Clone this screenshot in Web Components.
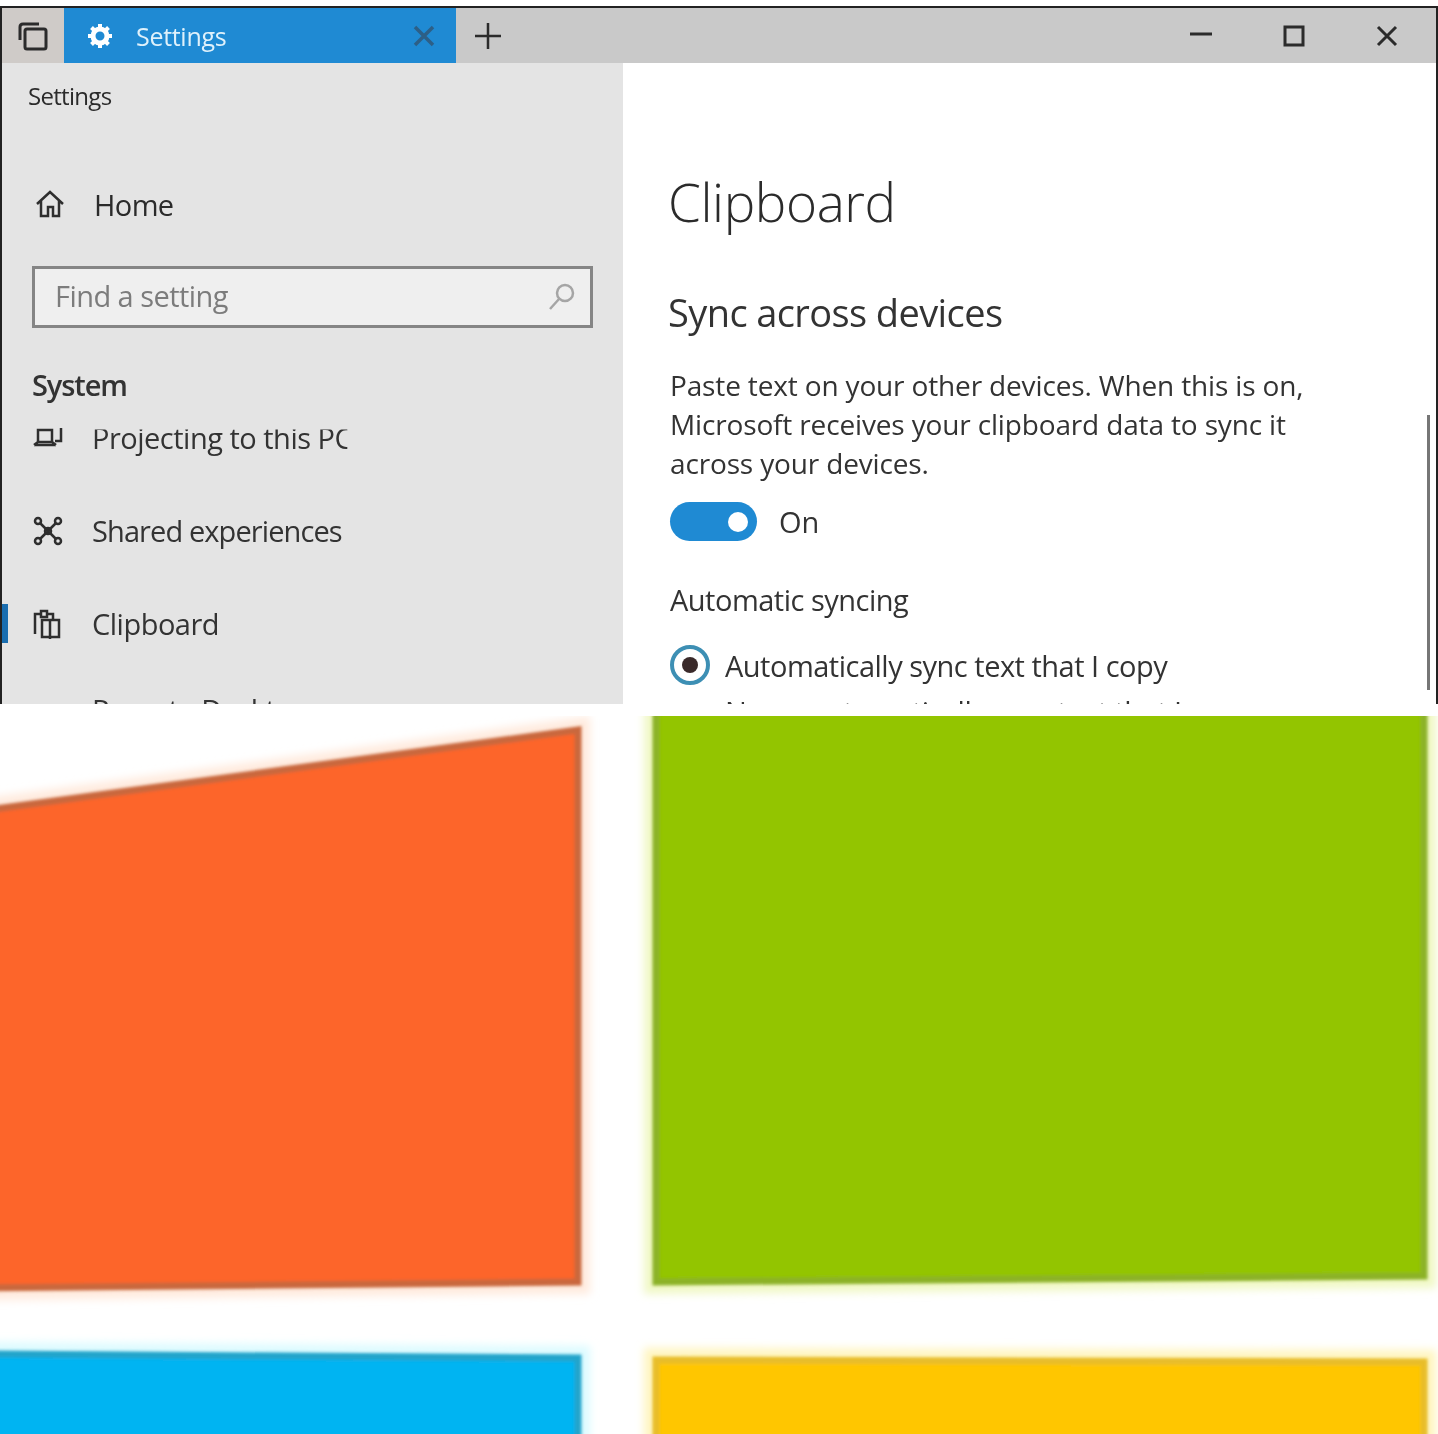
<!DOCTYPE html>
<html lang="en">
<head>
<meta charset="utf-8">
<title>Clipboard settings</title>
<style>
  html, body { margin: 0; padding: 0; background: #fff; }
  body { width: 1438px; height: 1434px; overflow: hidden; font-family: "Open Sans", "Liberation Sans", sans-serif; }
</style>
</head>
<body>
<settings-window>
  <title-bar slot="top" label="Settings"></title-bar>
  <settings-sidebar slot="side">
    <nav-item icon="project" clipped>Projecting to this PC</nav-item>
    <nav-item icon="shared" style="letter-spacing:-.9px">Shared experiences</nav-item>
    <nav-item icon="clipboard" active>Clipboard</nav-item>
    <nav-item icon="remote" style="margin-top:-7px">Remote Desktop</nav-item>
  </settings-sidebar>
  <clipboard-pane slot="main"></clipboard-pane>
</settings-window>
<windows-logo></windows-logo>

<script>
// small line icons, all in a 32x32 box
const ICONS = {
  home: '<path d="M3 16 16 4l13 12M7 13v15h7v-9h5v9h6V13"/>',
  project: '<path d="M6 8h14v12H6zM2 23h22M2 23l4-3M24 23l-4-3M29 6v13h-6"/>',
  shared: '<circle cx="6" cy="6" r="3"/><circle cx="26" cy="6" r="3"/><circle cx="6" cy="26" r="3"/><circle cx="26" cy="26" r="3"/><path d="M8 8l16 16M24 8 8 24"/><circle cx="16" cy="16" r="3"/>',
  clipboard: '<path d="M3 26V6h6V3h6v3h6v5M9 6v3h6V6"/><path d="M10 12h17v17H10zM18 12v19"/>',
  remote: '<path d="M4 13h24v14H4z"/>'
};

class TitleBar extends HTMLElement {
  connectedCallback() {
    this.attachShadow({ mode: 'open' });
    this.shadowRoot.innerHTML = `
      <style>
        :host { display: flex; height: 55px; background: #c9c9c9; align-items: stretch; color: #2b2b2b; }
        svg { display: block; fill: none; stroke: currentColor; }
        .views { width: 62px; display: flex; align-items: center; justify-content: center; background: #cfcbc8; }
        .tab { width: 392px; background: #1f8ad3; display: flex; align-items: center; color: #fff; box-sizing: border-box; padding-left: 22px; }
        .tab span { margin-left: 22px; font-size: 25px; letter-spacing: -.3px; flex: 1; color: #dff1fb; filter: blur(.5px); }
        .tab .close { color: #2d5f86; margin-right: 20px; }
        .plus { width: 64px; display: flex; align-items: center; justify-content: center; }
        .spacer { flex: 1; }
        .btn { width: 93px; display: flex; align-items: center; justify-content: center; }
        .btn:last-child { margin-right: 3px; }
      </style>
      <div class="views">
        <svg width="32" height="32" viewBox="0 0 32 32" stroke-width="3" stroke-linejoin="round"><path d="M3 20V7q0-3 3-3h16"/><path d="M8 11q0-2 2-2h17q2 0 2 2v16q0 2-2 2H10q-2 0-2-2z"/></svg>
      </div>
      <div class="tab">
        <svg width="28" height="28" viewBox="0 0 28 28" stroke-width="5"><circle cx="14" cy="14" r="7"/><path stroke-width="4" d="M14 2v5M14 21v5M2 14h5M21 14h5M5.5 5.5l3.500 3.500M19 19l3.500 3.500M22.500 5.500 19 9M9 19l-3.500 3.500"/></svg>
        <span>${this.getAttribute('label')}</span>
        <svg class="close" width="24" height="24" viewBox="0 0 24 24" stroke-width="3.500"><path d="M3 3l18 18M21 3 3 21"/></svg>
      </div>
      <div class="plus">
        <svg width="28" height="28" viewBox="0 0 28 28" stroke-width="2.500"><path d="M14 1v26M1 14h26"/></svg>
      </div>
      <div class="spacer"></div>
      <div class="btn"><svg width="24" height="24" viewBox="0 0 24 24" stroke-width="3"><path d="M1 10h22"/></svg></div>
      <div class="btn"><svg width="24" height="24" viewBox="0 0 24 24" stroke-width="3"><path d="M3 3h18v18H3z"/></svg></div>
      <div class="btn"><svg width="24" height="24" viewBox="0 0 24 24" stroke-width="3"><path d="M3 3l18 18M21 3 3 21"/></svg></div>
    `;
  }
}

class SearchBox extends HTMLElement {
  connectedCallback() {
    this.attachShadow({ mode: 'open' });
    this.shadowRoot.innerHTML = `
      <style>
        :host { display: flex; align-items: center; height: 62px; box-sizing: border-box; border: 3px solid #858585; background: #efefef; padding: 0 14px 4px 20px; }
        span { flex: 1; font-size: 29px; color: #7c7c7c; letter-spacing: -.55px; filter: blur(.5px); }
        svg { fill: none; stroke: #a5a5a5; stroke-width: 2.500; margin-top: 4px; }
      </style>
      <span><slot></slot></span>
      <svg width="28" height="28" viewBox="0 0 28 28"><circle cx="17" cy="10" r="8"/><path d="M11 16 2 26"/></svg>
    `;
  }
}

class NavItem extends HTMLElement {
  connectedCallback() {
    this.attachShadow({ mode: 'open' });
    this.shadowRoot.innerHTML = `
      <style>
        :host { display: flex; align-items: center; height: 93px; position: relative; padding-left: 30px; color: #333; letter-spacing: -.5px; }
        svg { width: 32px; height: 32px; fill: none; stroke: #2e2e2e; stroke-width: 2.500; flex: none; }
        span { margin-left: 28px; font-size: 29px; line-height: 40px; white-space: nowrap; filter: blur(.5px); }
        :host([clipped]) span { clip-path: inset(12px 5px 0 0); }
        .mark { position: absolute; left: -2px; top: 27px; width: 8px; height: 39px; background: #1a6eb0; }
      </style>
      ${this.hasAttribute('active') ? '<div class="mark"></div>' : ''}
      <svg viewBox="0 0 32 32">${ICONS[this.getAttribute('icon')]}</svg>
      <span><slot></slot></span>
    `;
  }
}

class SettingsSidebar extends HTMLElement {
  connectedCallback() {
    this.attachShadow({ mode: 'open' });
    this.shadowRoot.innerHTML = `
      <style>
        :host { display: block; height: 100%; overflow: hidden; background: #e4e4e4; box-sizing: border-box; }
        .crumb { font-size: 24px; color: #2b2b2b; padding: 16px 0 0 26px; line-height: 33px; letter-spacing: -.7px; filter: blur(.4px); }
        .home { display: flex; align-items: center; margin-top: 72px; padding-left: 32px; height: 40px; }
        .home svg { width: 32px; height: 32px; fill: none; stroke: #2e2e2e; stroke-width: 2.500; }
        .home span { margin-left: 28px; font-size: 29px; color: #2b2b2b; letter-spacing: -.6px; filter: blur(.4px); }
        search-box { margin: 42px 30px 0; }
        h2 { margin: 37px 0 0 30px; font-size: 29px; line-height: 40px; font-weight: 600; color: #333; letter-spacing: -1.1px; filter: blur(.4px); }
        .list { margin-top: -14px; }
      </style>
      <div class="crumb">Settings</div>
      <div class="home"><svg viewBox="0 0 32 32">${ICONS.home}</svg><span>Home</span></div>
      <search-box>Find a setting</search-box>
      <h2>System</h2>
      <div class="list"><slot></slot></div>
    `;
  }
}

class ToggleSwitch extends HTMLElement {
  connectedCallback() {
    this.attachShadow({ mode: 'open' });
    this.shadowRoot.innerHTML = `
      <style>
        :host { display: flex; align-items: center; gap: 22px; font-size: 29px; color: #333; }
        .track { width: 87px; height: 39px; border-radius: 20px; background: #1f8ad3; display: flex; align-items: center; justify-content: flex-end; padding-right: 9px; box-sizing: border-box; }
        .knob { width: 20px; height: 20px; border-radius: 50%; background: #fff; }
        span { filter: blur(.4px); }
      </style>
      <div class="track"><div class="knob"></div></div>
      <span><slot></slot></span>
    `;
  }
}

class RadioOption extends HTMLElement {
  connectedCallback() {
    this.attachShadow({ mode: 'open' });
    this.shadowRoot.innerHTML = `
      <style>
        :host { display: flex; align-items: center; gap: 15px; font-size: 29px; color: #333; letter-spacing: -.5px; height: 40px; }
        .ring { width: 40px; height: 40px; border-radius: 50%; box-sizing: border-box; border: 4px solid #3d8fb4; display: flex; align-items: center; justify-content: center; flex: none; }
        .dot { width: 16px; height: 16px; border-radius: 50%; background: #3a2a2a; }
        .ring.off { border-color: transparent; }
        .ring.off .dot { display: none; }
        span { filter: blur(.4px); white-space: nowrap; }
      </style>
      <div class="ring ${this.hasAttribute('checked') ? '' : 'off'}"><div class="dot"></div></div>
      <span><slot></slot></span>
    `;
  }
}

class ClipboardPane extends HTMLElement {
  connectedCallback() {
    this.attachShadow({ mode: 'open' });
    this.shadowRoot.innerHTML = `
      <style>
        :host { display: block; height: 100%; overflow: hidden; background: #fff; box-sizing: border-box; padding-left: 45px; position: relative; color: #333; }
        h1 { margin: 104px 0 0; font-size: 53px; line-height: 70px; font-weight: 300; color: #2b2b2b; letter-spacing: -.4px; filter: blur(.3px); }
        h3 { margin: 51px 0 0; font-size: 38px; line-height: 48px; font-weight: 400; color: #333; letter-spacing: -.6px; filter: blur(.4px); }
        p { margin: 30px 0 0 2px; width: 650px; font-size: 28px; line-height: 39px; letter-spacing: -.15px; filter: blur(.4px); }
        toggle-switch { margin: 19px 0 0 2px; }
        .sub { margin: 39px 0 0 2px; font-size: 29px; line-height: 40px; letter-spacing: -.5px; filter: blur(.4px); }
        radio-option { margin: 25px 0 0 2px; }
        radio-option + radio-option { margin-top: 6px; }
        .scroll { position: absolute; right: 6px; top: 352px; width: 3px; height: 275px; background: #767676; }
      </style>
      <h1>Clipboard</h1>
      <h3>Sync across devices</h3>
      <p>Paste text on your other devices. When this is on, Microsoft receives your clipboard data to sync it across your devices.</p>
      <toggle-switch>On</toggle-switch>
      <div class="sub">Automatic syncing</div>
      <radio-option checked>Automatically sync text that I copy</radio-option>
      <radio-option>Never automatically sync text that I copy</radio-option>
      <div class="scroll"></div>
    `;
  }
}

class SettingsWindow extends HTMLElement {
  connectedCallback() {
    this.attachShadow({ mode: 'open' });
    this.shadowRoot.innerHTML = `
      <style>
        :host { display: block; height: 704px; box-sizing: border-box; padding-top: 6px; background: #fff; }
        .frame { height: 100%; box-sizing: border-box; border: 2px solid #222; border-bottom: 0; display: flex; flex-direction: column; }
        .body { flex: 1; min-height: 0; display: grid; grid-template-columns: 621px 1fr; }
      </style>
      <div class="frame">
        <slot name="top"></slot>
        <div class="body"><slot name="side"></slot><slot name="main"></slot></div>
      </div>
    `;
  }
}

// the four panes are a free canvas, so this one is drawn as a single svg
class WindowsLogo extends HTMLElement {
  connectedCallback() {
    this.attachShadow({ mode: 'open' });
    this.shadowRoot.innerHTML = `
      <style>
        :host { display: block; height: 718px; margin-top: 12px; background: #fff; }
        svg { display: block; }
      </style>
      <svg width="1438" height="718" viewBox="0 716 1438 718">
        <defs>
          <filter id="halo" x="-5%" y="-5%" width="110%" height="110%"><feGaussianBlur stdDeviation="4"/></filter>
          <filter id="b" x="-5%" y="-5%" width="110%" height="110%"><feGaussianBlur stdDeviation="1.500"/></filter>
        </defs>
        <g filter="url(#halo)" stroke-width="24" fill="none">
          <path d="M-20 811 578 730V1282L-20 1288Z" stroke="#ffeadd"/>
          <path d="M656 680H1424V1276L656 1282Z" stroke="#f0f8c4"/>
          <path d="M-20 1354 578 1358V1450H-20Z" stroke="#dcfbff"/>
          <path d="M656 1360 1424 1362V1450H656Z" stroke="#fff5c0"/>
        </g>
        <g filter="url(#b)" stroke-width="7" stroke-linejoin="miter">
          <path d="M-20 811 578 730V1282L-20 1288Z" fill="#fd6529" stroke="#c9683c"/>
          <path d="M656 680H1424V1276L656 1282Z" fill="#93c500" stroke="#8cb225"/>
          <path d="M-20 1354 578 1358V1450H-20Z" fill="#00b4f2" stroke="#22a4cb"/>
          <path d="M656 1360 1424 1362V1450H656Z" fill="#ffc600" stroke="#e8bd2a"/>
        </g>
      </svg>
    `;
  }
}

customElements.define('title-bar', TitleBar);
customElements.define('search-box', SearchBox);
customElements.define('nav-item', NavItem);
customElements.define('settings-sidebar', SettingsSidebar);
customElements.define('toggle-switch', ToggleSwitch);
customElements.define('radio-option', RadioOption);
customElements.define('clipboard-pane', ClipboardPane);
customElements.define('settings-window', SettingsWindow);
customElements.define('windows-logo', WindowsLogo);
</script>
</body>
</html>
